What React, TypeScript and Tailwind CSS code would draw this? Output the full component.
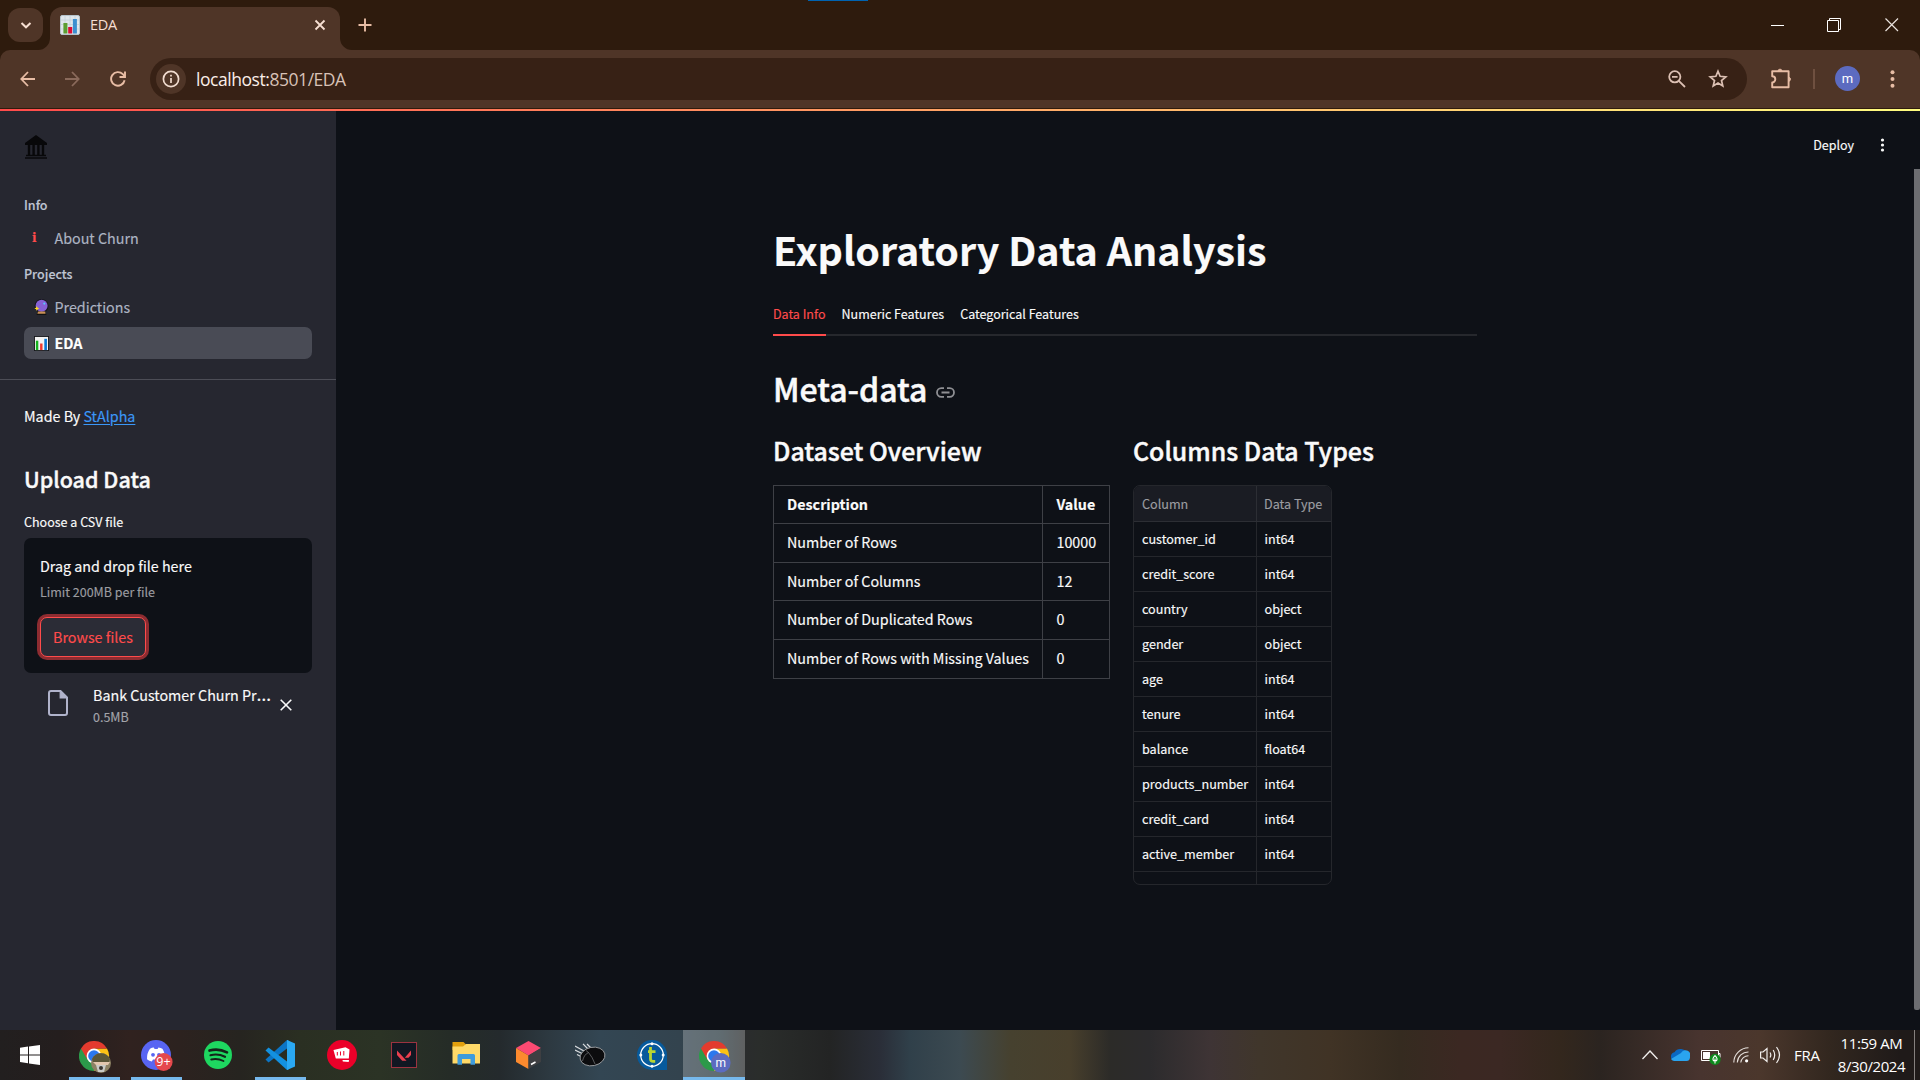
import type { ReactNode } from "react";

const SOURCE = "font-['Noto_Sans_CJK_SC',sans-serif]";
const UI = "font-['Open_Sans','Noto_Sans',sans-serif]";

const overview = [
  { label: "Description", value: "Value", h: "h-[38px]", head: true },
  { label: "Number of Rows", value: "10000", h: "h-[39px]" },
  { label: "Number of Columns", value: "12", h: "h-[38px]" },
  { label: "Number of Duplicated Rows", value: "0", h: "h-[39px]" },
  { label: "Number of Rows with Missing Values", value: "0", h: "h-[39px]" },
];

const columns: [string, string][] = [
  ["customer_id", "int64"],
  ["credit_score", "int64"],
  ["country", "object"],
  ["gender", "object"],
  ["age", "int64"],
  ["tenure", "int64"],
  ["balance", "float64"],
  ["products_number", "int64"],
  ["credit_card", "int64"],
  ["active_member", "int64"],
  ["", ""],
];

function BarChart({ className, dark }: { className: string; dark?: boolean }) {
  return dark ? (
    <svg className={className} viewBox="0 0 16 16">
      <rect width="16" height="16" fill="#16171b" />
      <rect x="1" y="1" width="14" height="14" fill="#f3f3f3" />
      <rect x="2" y="5" width="2.6" height="10" fill="#16b31e" />
      <rect x="6.5" y="8" width="2.6" height="7" fill="#f03a30" />
      <rect x="11" y="3" width="2.8" height="12" fill="#0a78d4" />
    </svg>
  ) : (
    <svg className={className} viewBox="0 0 20 20">
      <rect x="0.5" y="0.5" width="19" height="19" rx="1.5" fill="#dfe6eb" stroke="#b6c3cb" />
      <path d="M1 5H19M1 9.5H19M1 14H19M5 1V19M10 1V19M15 1V19" stroke="#c3d0d8" strokeWidth="0.8" />
      <rect x="3.4" y="8" width="4" height="10.5" fill="#5c9e31" />
      <rect x="8.2" y="12" width="4" height="6.5" fill="#dc0d35" />
      <rect x="12.9" y="4" width="4" height="14.5" fill="#3b8fd0" />
    </svg>
  );
}

function ChromeLogo({ className, children }: { className: string; children?: ReactNode }) {
  return (
    <svg className={className} viewBox="0 0 32 32">
      <path d="M15 15L2 7.5A15 15 0 0 0 15 30L21.5 18.8Z" fill="#2c9a4a" />
      <path d="M15 15V7.5H28A15 15 0 0 1 15 30L21.5 18.8Z" fill="#fbc116" />
      <path d="M2 7.5A15 15 0 0 1 28 7.5H15L8.5 18.8Z" fill="#e33b2e" />
      <circle cx="15" cy="15" r="7.4" fill="#fff" />
      <circle cx="15" cy="15" r="5.8" fill="#2b78ee" />
      {children}
    </svg>
  );
}

function BrowserChrome() {
  return (
    <header className="relative h-[109px] bg-[#2e1b0d]">
      <div className="absolute left-[808px] top-0 h-px w-[60px] bg-[#0063b1]" />
      <div className="flex h-[50px] items-end">
        <div className="mb-2 ml-2 flex h-[34px] w-[35px] items-center justify-center rounded-xl bg-[#4f3527]">
          <svg className="h-3 w-3" viewBox="0 0 12 12" fill="none" stroke="#f7dfd2" strokeWidth="2">
            <path d="M1.5 4L6 8.3L10.5 4" />
          </svg>
        </div>
        <svg className="-ml-[5px] h-3 w-3" viewBox="0 0 12 12">
          <path d="M12 0A12 12 0 0 1 0 12H12Z" fill="#4f3527" />
        </svg>
        <div className="flex h-[43px] w-[290px] items-center rounded-t-[12px] bg-[#4f3527] pl-[10px] pr-[14px]">
          <BarChart className="mb-2 h-5 w-5" />
          <span className={`${UI} mb-[7px] ml-[10px] flex-1 text-[14.5px] leading-5 tracking-[-0.3px] text-[#f5ded2]`}>EDA</span>
          <svg className="mb-2 h-3 w-3" viewBox="0 0 12 12" stroke="#f7dfd2" strokeWidth="1.8">
            <path d="M1.5 1.5L10.5 10.5M10.5 1.5L1.5 10.5" />
          </svg>
        </div>
        <svg className="h-3 w-3" viewBox="0 0 12 12">
          <path d="M0 0A12 12 0 0 0 12 12H0Z" fill="#4f3527" />
        </svg>
        <svg className="mb-[18px] ml-[6px] h-[14px] w-[14px]" viewBox="0 0 14 14" stroke="#e8bda5" strokeWidth="1.9">
          <path d="M7 0.5V13.5M0.5 7H13.5" />
        </svg>
        <div className="flex-1" />
        <svg className="mb-[17px] mr-[42px] h-[14px] w-[14px]" viewBox="0 0 14 14">
          <rect x="0" y="6" width="13" height="1" fill="#fff" />
        </svg>
        <svg className="mb-[18px] mr-[44px] h-[14px] w-[14px]" viewBox="0 0 14 14" fill="none" stroke="#fff">
          <path d="M0.5 2.5H11.5V13.5H0.5ZM2.5 2.5V0.5H13.5V11.5H11.5" />
        </svg>
        <svg className="mb-[18px] mr-[21px] h-[14px] w-[14px]" viewBox="0 0 14 14" stroke="#e9e2dd" strokeWidth="1.2">
          <path d="M0.5 0.5L13 13M13 0.5L0.5 13" />
        </svg>
      </div>
      <div className="flex h-[58px] items-center rounded-t-[10px] bg-[#4f3527]">
        <svg className="ml-5 h-4 w-[15px]" viewBox="0 0 15 16" fill="none" stroke="#e8bda5" strokeWidth="1.8">
          <path d="M15 8H1.5M8 1L1.3 8L8 15" />
        </svg>
        <svg className="ml-[30px] h-4 w-[15px]" viewBox="0 0 15 16" fill="none" stroke="#8a6a5b" strokeWidth="1.8">
          <path d="M0 8H13.5M7 1L13.7 8L7 15" />
        </svg>
        <svg className="ml-[30px] h-4 w-4" viewBox="0 0 16 16" fill="none" stroke="#e8bda5" strokeWidth="1.9">
          <path d="M14.6 9.3A6.8 6.8 0 1 1 12.8 3.2L14.6 5" />
          <path d="M15 0.5V6H9.5" />
        </svg>
        <div className="ml-6 flex h-[42px] w-[1597px] items-center rounded-full bg-[#372115] pl-[6px]">
          <div className="flex h-[30px] w-[30px] items-center justify-center rounded-full bg-[#4f3527]">
            <svg className="h-[18px] w-[18px]" viewBox="0 0 18 18" fill="none" stroke="#f1dcd0" strokeWidth="1.7">
              <circle cx="9" cy="9" r="7.6" />
              <path d="M9 8V13M9 4.8V6.6" />
            </svg>
          </div>
          <div className={`${UI} ml-[10px] flex-1 whitespace-nowrap pb-px text-[17.5px] leading-6 tracking-[-0.45px] text-[#fbeee8]`}>
            localhost:<span className="text-[#d8c2b7]">8501/EDA</span>
          </div>
          <svg className="mr-[22px] h-[18px] w-[18px]" viewBox="0 0 18 18" fill="none" stroke="#dcc0b3" strokeWidth="1.8">
            <circle cx="6.8" cy="6.8" r="5.6" />
            <path d="M4 6.8H9.6M10.8 10.8L17 17" />
          </svg>
          <svg className="mr-[19px] h-5 w-5" viewBox="0 0 20 20" fill="none" stroke="#dcc0b3" strokeWidth="1.7">
            <path d="M10 2.2L12.1 7.3L17.8 7.8L13.5 11.5L14.8 17L10 14.1L5.2 17L6.5 11.5L2.2 7.8L7.9 7.3Z" />
          </svg>
        </div>
        <svg className="mb-[2px] ml-6 h-[21px] w-[21px]" viewBox="0 0 21 21" fill="none" stroke="#e8bda5" strokeWidth="1.9" strokeLinejoin="round">
          <path d="M1.2 3.2H17.6V19.2H1.2V14.4A3 3 0 0 0 1.2 8.2Z" />
          <path d="M7 2.6A2.1 2.1 0 0 1 11 2.6ZM18.2 9.3A2.1 2.1 0 0 1 18.2 13.2Z" fill="#e8bda5" strokeWidth="0.8" />
        </svg>
        <div className="ml-[21px] h-5 w-[2px] bg-[#6f5040]" />
        <div className="mb-[2px] ml-5 flex h-[25px] w-[25px] items-center justify-center rounded-full bg-[#5c6bc0] font-['Roboto',sans-serif] text-[13px] leading-none text-white">m</div>
        <svg className="ml-[30px] h-5 w-[5px]" viewBox="0 0 5 20" fill="#e8bda5">
          <circle cx="2.5" cy="3.2" r="2" />
          <circle cx="2.5" cy="10" r="2" />
          <circle cx="2.5" cy="16.8" r="2" />
        </svg>
      </div>
    </header>
  );
}

function Sidebar() {
  return (
    <aside className="flex w-[336px] shrink-0 flex-col bg-[#262730] text-[#fafafa] [-webkit-text-stroke:0.15px]">
      <div className="flex flex-col px-6 pt-6">
        <svg className="ml-px h-6 w-[22px]" viewBox="0 0 22 24">
          <path d="M11 0L22 8V10H0V8Z" fill="#08080a" />
          <path d="M4 10V20M8.6 10V20M13.4 10V20M18 10V20" stroke="#08080a" strokeWidth="2.4" />
          <path d="M1 20.5H21M0 23H22" stroke="#08080a" strokeWidth="1.7" />
        </svg>
        <div className="mt-9 text-[12.5px] font-medium leading-5 text-[#bfc5d3]">Info</div>
        <div className="mt-[7px] flex h-8 items-center pl-2 text-[#adb4c3]">
          <span className="w-[22.5px] font-['DejaVu_Serif',serif] text-[12px] font-bold leading-none text-[#ff4b4b]">i</span>
          <span className="text-[14.3px] leading-8">About Churn</span>
        </div>
        <div className="mt-[10px] text-[12.5px] font-medium leading-5 text-[#bfc5d3]">Projects</div>
        <div className="mt-[7px] flex h-8 items-center pl-[10px] text-[#adb4c3]">
          <svg className="mr-[5.5px] h-4 w-[15px]" viewBox="0 0 15 16">
            <path d="M4 12H11L12.5 16H2.5Z" fill="#111" />
            <circle cx="7.5" cy="7" r="7" fill="#15141c" />
            <circle cx="7.6" cy="6.8" r="6" fill="#8661d6" />
            <path d="M4 12.4H11.2L11.6 14.8H3.4Z" fill="#c98f55" />
            <path d="M2.8 7L3.6 8.7L5.3 9.5L3.6 10.3L2.8 12L2 10.3L0.4 9.5L2 8.7Z" fill="#ffdb1f" />
            <circle cx="10.3" cy="4.6" r="1.1" fill="#55c8ff" />
          </svg>
          <span className="text-[14.3px] leading-8">Predictions</span>
        </div>
        <div className="mt-1 flex h-8 items-center rounded-[7px] bg-[#494b55] pl-[10px]">
          <BarChart dark className="mr-[5.5px] h-[15px] w-[15px]" />
          <span className="text-[14.3px] font-bold leading-8 text-white">EDA</span>
        </div>
      </div>
      <div className="mt-5 h-px bg-[#4c4d56]" />
      <div className="flex flex-col px-6 pt-6">
        <div className="text-[14.3px] leading-6">
          Made By <span className="text-[#3b97f7] underline underline-offset-2">StAlpha</span>
        </div>
        <div className="mt-9 text-[21.5px] font-medium leading-[30px] [-webkit-text-stroke:0.4px]">Upload Data</div>
        <div className="mt-[18px] text-[12.5px] leading-5">Choose a CSV file</div>
        <div className="mt-[6px] h-[135px] rounded-[7px] bg-[#0e1117] px-4 pt-4">
          <div className="text-[14.3px] leading-6">Drag and drop file here</div>
          <div className="mt-1 text-[12.5px] leading-5 text-[#9b9ca0]">Limit 200MB per file</div>
          <button className="mt-[15px] flex h-10 w-[106px] items-center justify-center whitespace-nowrap rounded-[7px] border border-[#ff4b4b] bg-[#2b2c36] text-[14.3px] leading-6 text-[#ff4b4b] ring-[3px] ring-[#8d2c31]">
            Browse files
          </button>
        </div>
        <div className="mt-[10px] flex h-[46px] pl-6">
          <svg className="mt-[7px] h-[26px] w-5" viewBox="0 0 20 26" fill="none" stroke="#b0b3cb" strokeWidth="2">
            <path d="M12.5 1H3A2 2 0 0 0 1 3V23A2 2 0 0 0 3 25H17A2 2 0 0 0 19 23V7.5Z" />
            <path d="M12.2 1V8H19Z" fill="#b0b3cb" strokeWidth="1.2" />
          </svg>
          <div className="ml-[25px] w-[180px]">
            <div className="h-6 whitespace-nowrap text-[14.3px] leading-6">
              Bank Customer Churn Pr<span className="font-['Noto_Sans',sans-serif] text-[18.5px] leading-none">…</span>
            </div>
            <div className="text-[12.5px] leading-5 text-[#a3a4aa]">0.5MB</div>
          </div>
          <svg className="ml-[7px] mt-4 h-3 w-3" viewBox="0 0 12 12" stroke="#fafafa" strokeWidth="1.6">
            <path d="M0.7 0.7L11.3 11.3M11.3 0.7L0.7 11.3" />
          </svg>
        </div>
      </div>
    </aside>
  );
}

function OverviewTable() {
  return (
    <div className="mt-[19px] w-[337px] border-l border-t border-[#3e4046] text-[14.3px] leading-5">
      {overview.map((r) => (
        <div key={r.label} className={`flex ${r.h} ${r.head ? "font-bold" : ""}`}>
          <div className="flex w-[269px] items-center border-b border-r border-[#3e4046] pb-[2px] pl-[13px]">{r.label}</div>
          <div className="flex flex-1 items-center border-b border-r border-[#3e4046] pb-[2px] pl-[13.5px]">{r.value}</div>
        </div>
      ))}
    </div>
  );
}

function TypesTable() {
  return (
    <div className="mt-[19px] h-[400px] w-[199px] overflow-hidden rounded-[7px] border border-[#25272c] text-[12.6px] leading-5">
      <div className="flex h-9 border-b border-[#2c2e34] bg-[#1a1c23] text-[#9c9da1]">
        <div className="flex w-[123px] items-center border-r border-[#2c2e34] pl-2">Column</div>
        <div className="flex items-center whitespace-nowrap pl-[7px]">Data Type</div>
      </div>
      {columns.map(([name, type]) => (
        <div key={name} className="flex h-[35px] border-b border-[#25272c]">
          <div className="flex w-[123px] items-center border-r border-[#25272c] pl-2">{name}</div>
          <div className="flex items-center pl-[7.5px]">{type}</div>
        </div>
      ))}
    </div>
  );
}

function Main() {
  return (
    <main className="flex flex-1 flex-col bg-[#0e1117] text-[#fafafa] [-webkit-text-stroke:0.15px]">
      <div className="flex h-[58px] items-center justify-end pt-[10px]">
        <span className="text-[12.5px] leading-5">Deploy</span>
        <svg className="ml-[26px] mr-[35px] h-[14px] w-[5px]" viewBox="0 0 5 14" fill="#fafafa">
          <circle cx="2.5" cy="2" r="1.6" />
          <circle cx="2.5" cy="7" r="1.6" />
          <circle cx="2.5" cy="12" r="1.6" />
        </svg>
      </div>
      <div className="flex flex-1 justify-end">
        <div className="mr-[437px] mt-14 w-[704px]">
          <h1 className="whitespace-nowrap text-[39.4px] font-bold leading-[48px]">Exploratory Data Analysis</h1>
          <div className="mt-[31px] flex h-8 gap-4 border-b-2 border-[#26282d] text-[12.5px] leading-5">
            <div className="h-8 border-b-2 border-[#ff4b4b] text-[#ff4b4b]">Data Info</div>
            <div>Numeric Features</div>
            <div>Categorical Features</div>
          </div>
          <div className="mt-8 flex items-center">
            <h2 className="text-[32px] font-medium leading-[40px] [-webkit-text-stroke:0.5px]">Meta-data</h2>
            <svg className="ml-[9px] mt-2 h-[11px] w-[19px]" viewBox="0 0 19 11" fill="none" stroke="#8f9094" strokeWidth="1.8">
              <path d="M8 1.2H5.3A4.3 4.3 0 0 0 5.3 9.8H8M11 1.2H13.7A4.3 4.3 0 0 1 13.7 9.8H11M5.5 5.5H13.5" />
            </svg>
          </div>
          <div className="mt-[26px] flex">
            <div className="w-[360px]">
              <h3 className="text-[24.9px] font-medium leading-8 [-webkit-text-stroke:0.45px]">Dataset Overview</h3>
              <OverviewTable />
            </div>
            <div>
              <h3 className="whitespace-nowrap text-[24.9px] font-medium leading-8 [-webkit-text-stroke:0.45px]">Columns Data Types</h3>
              <TypesTable />
            </div>
          </div>
        </div>
        <div className="h-[841px] w-[6px] rounded-b-[2px] bg-[#6c6d71]" />
      </div>
    </main>
  );
}

function TaskButton({ children, open, active }: { children: ReactNode; open?: boolean; active?: boolean }) {
  return (
    <div className={`relative flex h-[50px] w-[62px] items-center justify-center ${active ? "bg-white/25" : ""}`}>
      {children}
      {(open || active) && <div className={`absolute bottom-0 h-[3px] bg-[#76b9ed] ${active ? "w-full" : "w-[51px]"}`} />}
    </div>
  );
}

function Taskbar() {
  return (
    <footer
      className={`${UI} flex h-[50px] text-white bg-[linear-gradient(90deg,#221f1f_0px,#241e1e_60px,#30221f_130px,#2c221f_180px,#262420_240px,#2a2f22_300px,#2b3325_380px,#252c27_450px,#242a2d_500px,#2d3941_550px,#334653_600px,#33434e_680px,#2b3b42_720px,#2a2c2d_745px,#2a2d2b_760px,#232424_830px,#2a2e38_880px,#30404a_910px,#3c4a51_960px,#46412f_1010px,#483f2c_1070px,#2c2b28_1110px,#2c2b2d_1150px,#3e3435_1210px,#40362b_1260px,#403325_1330px,#352b20_1400px,#3b2822_1460px,#3b2823_1500px,#33271d_1560px,#2b2420_1600px,#48342f_1700px,#4b372c_1760px,#32271f_1830px,#1f1a19_1900px)]`}
    >
      <div className="flex h-[50px] w-[63px] items-center pl-5">
        <svg className="h-5 w-5" viewBox="0 0 20 20" fill="#fff">
          <path d="M0 2.8L8 1.6V9.4H0ZM9 1.4L20 0V9.4H9ZM0 10.4H8V18.3L0 17.1ZM9 10.4H20V20L9 18.5Z" />
        </svg>
      </div>
      <TaskButton open>
        <ChromeLogo className="ml-px mt-[3px] h-8 w-8">
          <circle cx="22" cy="22" r="10" fill="#8c8164" />
          <path d="M13 18A10 10 0 0 1 31 18L30 21H14Z" fill="#5a5638" />
          <path d="M14 21H31L29 24H17Z" fill="#e1c6ae" />
          <path d="M17 24H27L25 31H19Z" fill="#c9cac6" />
          <circle cx="22" cy="27" r="2" fill="#3a3632" />
        </ChromeLogo>
      </TaskButton>
      <TaskButton open>
        <svg className="ml-[2px] mt-[2px] h-8 w-8" viewBox="0 0 32 32">
          <circle cx="15" cy="15" r="15" fill="#5865f2" />
          <path d="M9 8.8Q11 7.6 12.8 7.6L13.6 9H16.6L17.4 7.6Q19.6 7.8 21.4 8.8Q24.2 13 24 19.2Q21.8 21 19.4 21.4L18.2 19.4H12L10.8 21.4Q8.2 21 6 19.2Q5.8 13.2 9 8.8Z" fill="#fff" />
          <circle cx="12" cy="14.8" r="1.9" fill="#5865f2" />
          <circle cx="18" cy="14.8" r="1.9" fill="#5865f2" />
          <circle cx="22.6" cy="22" r="9" fill="#e5484d" />
          <text x="22.4" y="26.2" textAnchor="middle" fontSize="12.5" fill="#fff" fontFamily="Open Sans, sans-serif">9+</text>
        </svg>
      </TaskButton>
      <TaskButton>
        <svg className="h-7 w-7" viewBox="0 0 28 28" fill="none" stroke="#14231a" strokeLinecap="round">
          <circle cx="14" cy="14" r="14" fill="#1ed760" stroke="none" />
          <path d="M5.5 9.6Q14.5 7 23 11.4" strokeWidth="2.6" />
          <path d="M6.5 14.2Q14 12.2 21 15.8" strokeWidth="2.2" />
          <path d="M7.2 18.5Q13.5 17 19.5 20" strokeWidth="1.8" />
        </svg>
      </TaskButton>
      <TaskButton open>
        <svg className="mr-px h-[30px] w-[30px]" viewBox="0 0 30 30">
          <path d="M22 0L30 3.5V26.5L22 30Z" fill="#2aa8f2" />
          <path d="M22 0L0.5 19.5L3.5 22.5L22 8.5Z" fill="#0b74c4" />
          <path d="M22 30L0.5 10.5L3.5 7.5L22 21.5Z" fill="#1391e0" />
          <path d="M22 0L24 1V29L22 30Z" fill="#2aa8f2" />
        </svg>
      </TaskButton>
      <TaskButton>
        <svg className="h-[30px] w-[30px]" viewBox="0 0 30 30">
          <circle cx="15" cy="15" r="15" fill="#eb0029" />
          <path d="M6.5 10L18.5 7.2L22.5 9.5L21.8 18.6H8.8Z" fill="#fff" />
          <path d="M10.3 12V15.5M13.5 11.5V15.5M16.8 11V15.5" stroke="#eb0029" strokeWidth="1" />
          <path d="M15.5 20H22L21.7 22L15.8 21.4Z" fill="#fff" />
        </svg>
      </TaskButton>
      <TaskButton>
        <svg className="h-[26px] w-[26px]" viewBox="0 0 26 26">
          <rect x="0.5" y="0.5" width="25" height="25" fill="#111722" stroke="#9c3340" />
          <path d="M6 8.5L15.5 18.8H11.2L6 13ZM20 8.5V13L17.5 15.8H13.8Z" fill="#e9404f" />
        </svg>
      </TaskButton>
      <TaskButton>
        <svg className="mb-1 h-6 w-7" viewBox="0 0 28 24">
          <path d="M0.5 1H11.5L14 3.5V9H0.5Z" fill="#e3a00d" />
          <path d="M0.5 5.5H11L14 3H28V22.5H0.5Z" fill="#ffd968" />
          <path d="M5.5 23.8V14.5Q5.5 13 7 13H21.5Q23 13 23 14.5V23.8H18.5V18H10V23.8Z" fill="#3f9bdb" />
        </svg>
      </TaskButton>
      <TaskButton>
        <svg className="h-7 w-[25px]" viewBox="0 0 25 28">
          <path d="M12.5 0L25 7L12.5 14.5L0 7Z" fill="#fb4a72" />
          <path d="M0 7L12.5 14.5V28L0 21Z" fill="#fc8a2e" />
          <path d="M25 7L12.5 14.5V28L25 21Z" fill="#3e3f42" />
          <path d="M15 23.5L19.5 21" stroke="#fff" strokeWidth="1.6" />
        </svg>
      </TaskButton>
      <TaskButton>
        <svg className="h-6 w-[31px]" viewBox="0 0 31 24" fill="none" stroke="#d7dadd">
          <path d="M0 3L9 8M0 7L7 10.5M2 11.5L6 13.5M8 0.8L13 6M12 1L16 5" strokeWidth="1.2" />
          <ellipse cx="17.5" cy="13.5" rx="12.6" ry="9.2" transform="rotate(-12 17.5 13.5)" fill="#0c0c0e" stroke="#9a9da0" strokeWidth="0.9" />
          <path d="M7.5 18Q9 11.5 13.5 9.5Q17.5 14 20 21M13.5 9.5L11 7.5" stroke="#8d8f92" strokeWidth="0.6" />
        </svg>
      </TaskButton>
      <TaskButton>
        <svg className="h-[30px] w-[30px]" viewBox="0 0 30 30">
          <path d="M15 0A15 15 0 0 1 30 15V30H15A15 15 0 0 1 15 0Z" fill="#075a9c" />
          <circle cx="15" cy="15" r="11.3" fill="none" stroke="#fff" strokeWidth="1.2" />
          <g fill="#fff">
            <circle cx="15" cy="3.8" r="1.5" />
            <circle cx="15" cy="26.2" r="1.5" />
            <circle cx="3.8" cy="15" r="1.5" />
            <circle cx="26.2" cy="15" r="1.5" />
          </g>
          <path d="M13.5 7V19Q13.5 21.3 16 21.3H18.2M11 11.7H18.5" fill="none" stroke="#b9d532" strokeWidth="2.8" />
        </svg>
      </TaskButton>
      <TaskButton active>
        <ChromeLogo className="ml-px mt-[3px] h-8 w-8">
          <circle cx="21.8" cy="21.8" r="9.8" fill="#5c6bc0" />
          <text x="21.8" y="25.6" textAnchor="middle" fontSize="12" fill="#fff" fontFamily="Roboto, sans-serif">m</text>
        </ChromeLogo>
      </TaskButton>
      <div className="flex-1" />
      <div className="flex items-center">
        <svg className="h-[10px] w-4" viewBox="0 0 16 10" fill="none" stroke="#f2efed" strokeWidth="1.3">
          <path d="M0.5 9L8 1L15.5 9" />
        </svg>
        <svg className="ml-3 mr-px h-[14px] w-5" viewBox="0 0 20 14">
          <path d="M4.5 13H16A4 4 0 0 0 17 5.5A7 7 0 0 0 4.5 4.2A4.5 4.5 0 0 0 4.5 13Z" fill="#0a68c2" />
          <path d="M11 5A5 5 0 0 1 20 9.5A3.8 3.8 0 0 1 16 13H4.5A4.4 4.4 0 0 1 1 11Z" fill="#2aa4ef" />
        </svg>
        <svg className="ml-[10px] mt-[2px] h-[18px] w-5" viewBox="0 0 20 18">
          <path d="M0.5 3.5H17.5V13.5H0.5ZM17.5 6.5H19V10.5H17.5" fill="none" stroke="#fff" />
          <rect x="2" y="5" width="7" height="7" fill="#fff" />
          <circle cx="14" cy="12.4" r="5.6" fill="#0d8a1c" />
          <path d="M14 8.6Q17 11.4 15.6 13.6H12.4Q11 11.4 14 8.6ZM14 11.4V16.4" fill="none" stroke="#fff" strokeWidth="1.1" />
        </svg>
        <svg className="ml-3 h-4 w-4" viewBox="0 0 16 16" fill="none" stroke="#e6e0dc" strokeWidth="1.1">
          <path d="M0.8 15.5A15 15 0 0 1 15.5 0.8M4.3 15.5A11 11 0 0 1 15.5 5M7.8 15.5A7.6 7.6 0 0 1 15.5 8.7" />
          <circle cx="13.6" cy="13.8" r="1.6" fill="#fff" stroke="none" />
        </svg>
        <svg className="ml-[11px] h-[18px] w-[21px]" viewBox="0 0 21 18" fill="none" stroke="#f2efed" strokeWidth="1.2">
          <path d="M0.6 6H3L7 2.5V15.5L3 12H0.6ZM10 6.5Q11.6 9 10 11.5M13.2 4Q16.2 9 13.2 14M16.5 1Q22.5 9 16.5 17" />
        </svg>
        <span className="ml-[13px] w-[26px] whitespace-nowrap text-[15px] leading-5 tracking-[-0.3px]">FRA</span>
        <div className="ml-[16px] w-[71px] whitespace-nowrap pb-px text-center text-[15px] leading-[23px] tracking-[-0.4px]">
          <div>11:59 AM</div>
          <div>8/30/2024</div>
        </div>
        <div className="ml-[7px] mr-[5px] h-[50px] w-px bg-[#85807e]" />
      </div>
    </footer>
  );
}

export default function App() {
  return (
    <div className={`${SOURCE} flex h-[1080px] w-[1920px] flex-col overflow-hidden`}>
      <BrowserChrome />
      <div className="h-[2px] shrink-0 bg-[linear-gradient(90deg,#ff4b4b,#fffd80)]" />
      <div className="flex h-[919px] shrink-0">
        <Sidebar />
        <Main />
      </div>
      <Taskbar />
    </div>
  );
}
